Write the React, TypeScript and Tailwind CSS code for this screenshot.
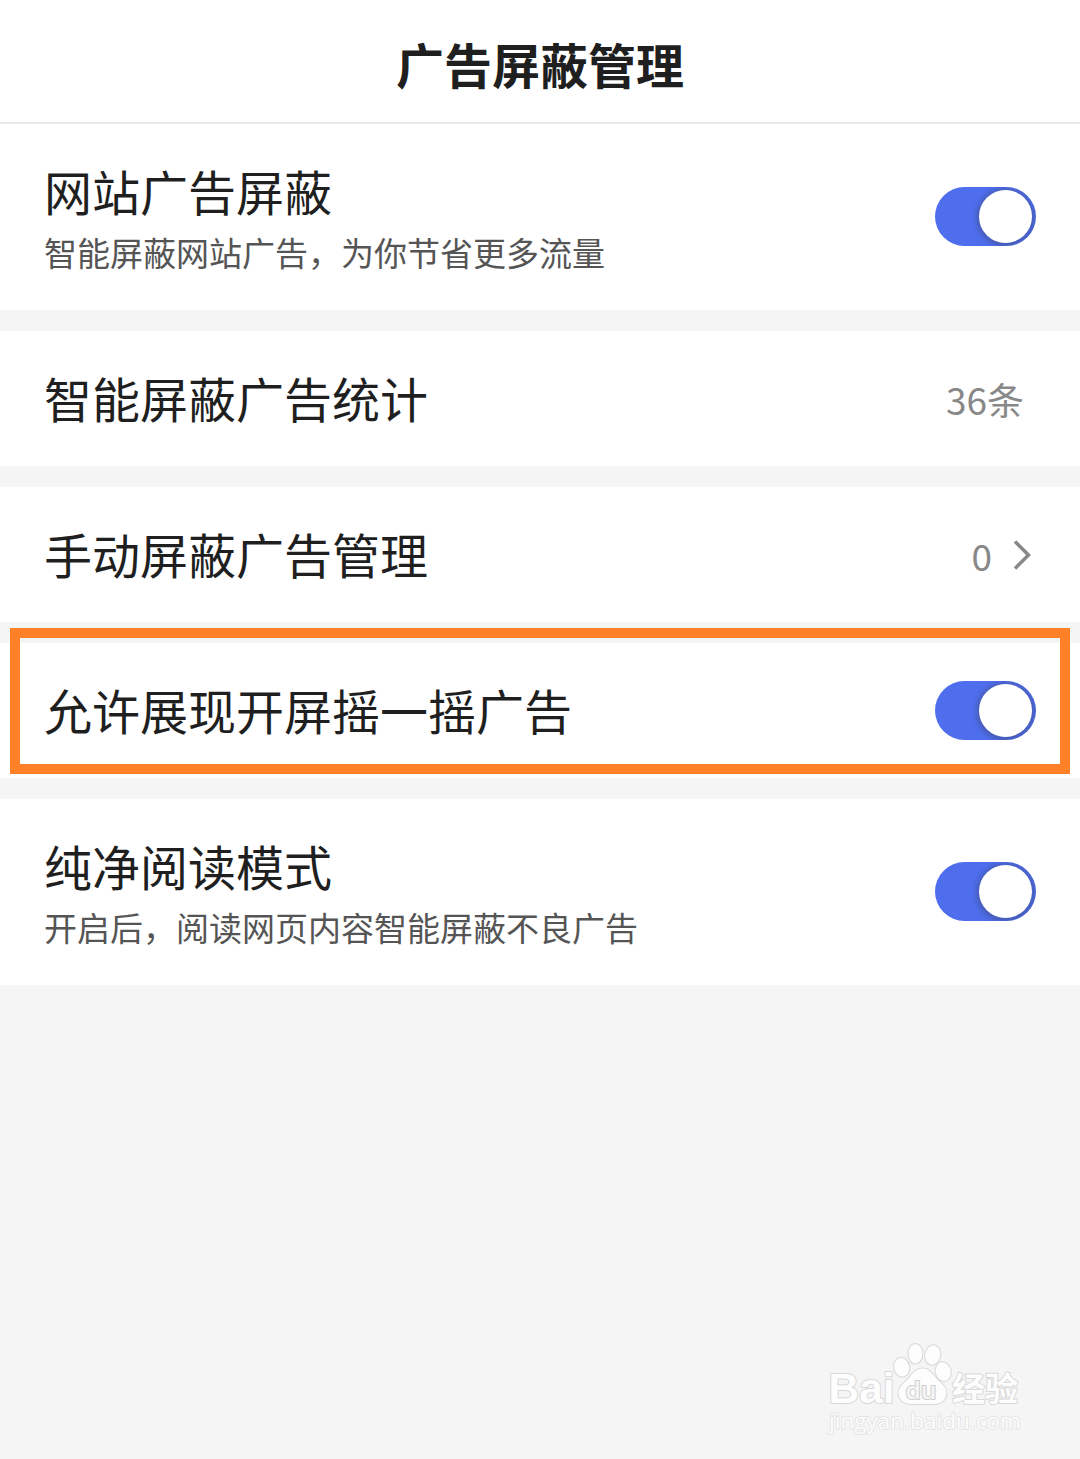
import React from "react";

function Toggle() {
  return (
    <div
      role="switch"
      aria-checked="true"
      className="-mt-px flex h-[59px] w-[101px] shrink-0 items-center justify-end overflow-hidden rounded-full bg-[#4e6eee] pr-1"
    >
      <div className="h-[53px] w-[53px] rounded-full bg-white shadow-[0_1px_5px_3px_rgba(60,60,80,0.35)]" />
    </div>
  );
}

function Row({
  title,
  subtitle,
  children,
}: {
  title: string;
  subtitle?: string;
  children: React.ReactNode;
}) {
  return (
    <section
      className={
        subtitle
          ? "flex h-[186px] items-center justify-between bg-white px-11"
          : "flex h-[135px] items-center justify-between bg-white px-11"
      }
    >
      <div className={subtitle ? "flex flex-col pt-1" : "flex flex-col pb-1"}>
        <h2 className="text-[48px] leading-[60px] text-[#1f1f1f]">{title}</h2>
        {subtitle && (
          <p className="mt-[6px] text-[33px] leading-[52px] text-[#555]">{subtitle}</p>
        )}
      </div>
      {children}
    </section>
  );
}

function Watermark() {
  const toes = [
    { x: 91.7, y: 37.3, rx: 7.5, ry: 9.5, r: -12 },
    { x: 105.4, y: 23.7, rx: 7, ry: 9.7, r: 0 },
    { x: 122.7, y: 25, rx: 7.5, ry: 9.7, r: 12 },
    { x: 133.2, y: 41.6, rx: 7.5, ry: 9.5, r: -12 },
  ];
  return (
    <svg
      className="absolute right-10 bottom-[14px] h-[115px] w-[230px]"
      viewBox="0 0 230 115"
      fill="#fdfdfd"
      stroke="#d8d8d8"
      strokeWidth="2"
      strokeLinejoin="round"
      paintOrder="stroke"
    >
      <text x="18.500" y="73" fontFamily="Liberation Sans" fontWeight="700" fontSize="43" textLength="66" lengthAdjust="spacingAndGlyphs">
        Bai
      </text>
      {toes.map((t) => (
        <ellipse key={t.x} cx={t.x} cy={t.y} rx={t.rx} ry={t.ry} transform={`rotate(${t.r} ${t.x} ${t.y})`} />
      ))}
      <path d="M112.500 38.500C121 38.500 123 46 130 52C136 57 138 62 135.500 67.500C132 75.500 122 74 112.500 74C103 74 93 75.500 89.500 67.500C87 62 89 57 95 52C102 46 104 38.500 112.500 38.500Z" />
      <text x="95.500" y="68.500" fontFamily="Open Sans" fontWeight="600" fontSize="23" fill="#f5f5f5" stroke="#cecece" strokeWidth="2" textLength="31" lengthAdjust="spacingAndGlyphs">
        du
      </text>
      <text x="142" y="71" fontFamily="Noto Sans CJK SC" fontWeight="700" fontSize="33">
        经验
      </text>
      <text x="19" y="99" fontFamily="Open Sans" fontSize="22" stroke="#e2e2e2" strokeWidth="1.600" textLength="192" lengthAdjust="spacingAndGlyphs">
        jingyan.baidu.com
      </text>
    </svg>
  );
}

export default function App() {
  return (
    <main className="relative h-[1459px] w-[1080px] overflow-hidden bg-[#f5f5f5] font-['Noto_Sans_CJK_SC',sans-serif]">
      <header className="flex h-[124px] items-center justify-center border-b-2 border-[#e8e8e8] bg-white pt-1">
        <h1 className="text-[48px] leading-[60px] font-bold text-[#1f1f1f]">广告屏蔽管理</h1>
      </header>
      <div className="flex flex-col gap-[21px]">
        <Row title="网站广告屏蔽" subtitle="智能屏蔽网站广告，为你节省更多流量">
          <Toggle />
        </Row>
        <Row title="智能屏蔽广告统计">
          <span className="mr-3 text-[37px] leading-[60px] text-[#888]">36条</span>
        </Row>
        <Row title="手动屏蔽广告管理">
          <div className="flex items-center gap-[21px] text-[#888]">
            <span className="text-[37px] leading-[60px]">0</span>
            <svg className="mr-[5px] h-8 w-[18px]" viewBox="0 0 18 32" fill="none" stroke="currentColor" strokeWidth="3.500">
              <path d="M2 2.500L15.500 16L2 29.500" />
            </svg>
          </div>
        </Row>
        <div className="relative">
          <Row title="允许展现开屏摇一摇广告">
            <Toggle />
          </Row>
          <div className="absolute -top-[15px] left-[10px] h-[146px] w-[1060px] border-[10px] border-[#ff8127]" />
        </div>
        <Row title="纯净阅读模式" subtitle="开启后，阅读网页内容智能屏蔽不良广告">
          <Toggle />
        </Row>
      </div>
      <Watermark />
    </main>
  );
}
